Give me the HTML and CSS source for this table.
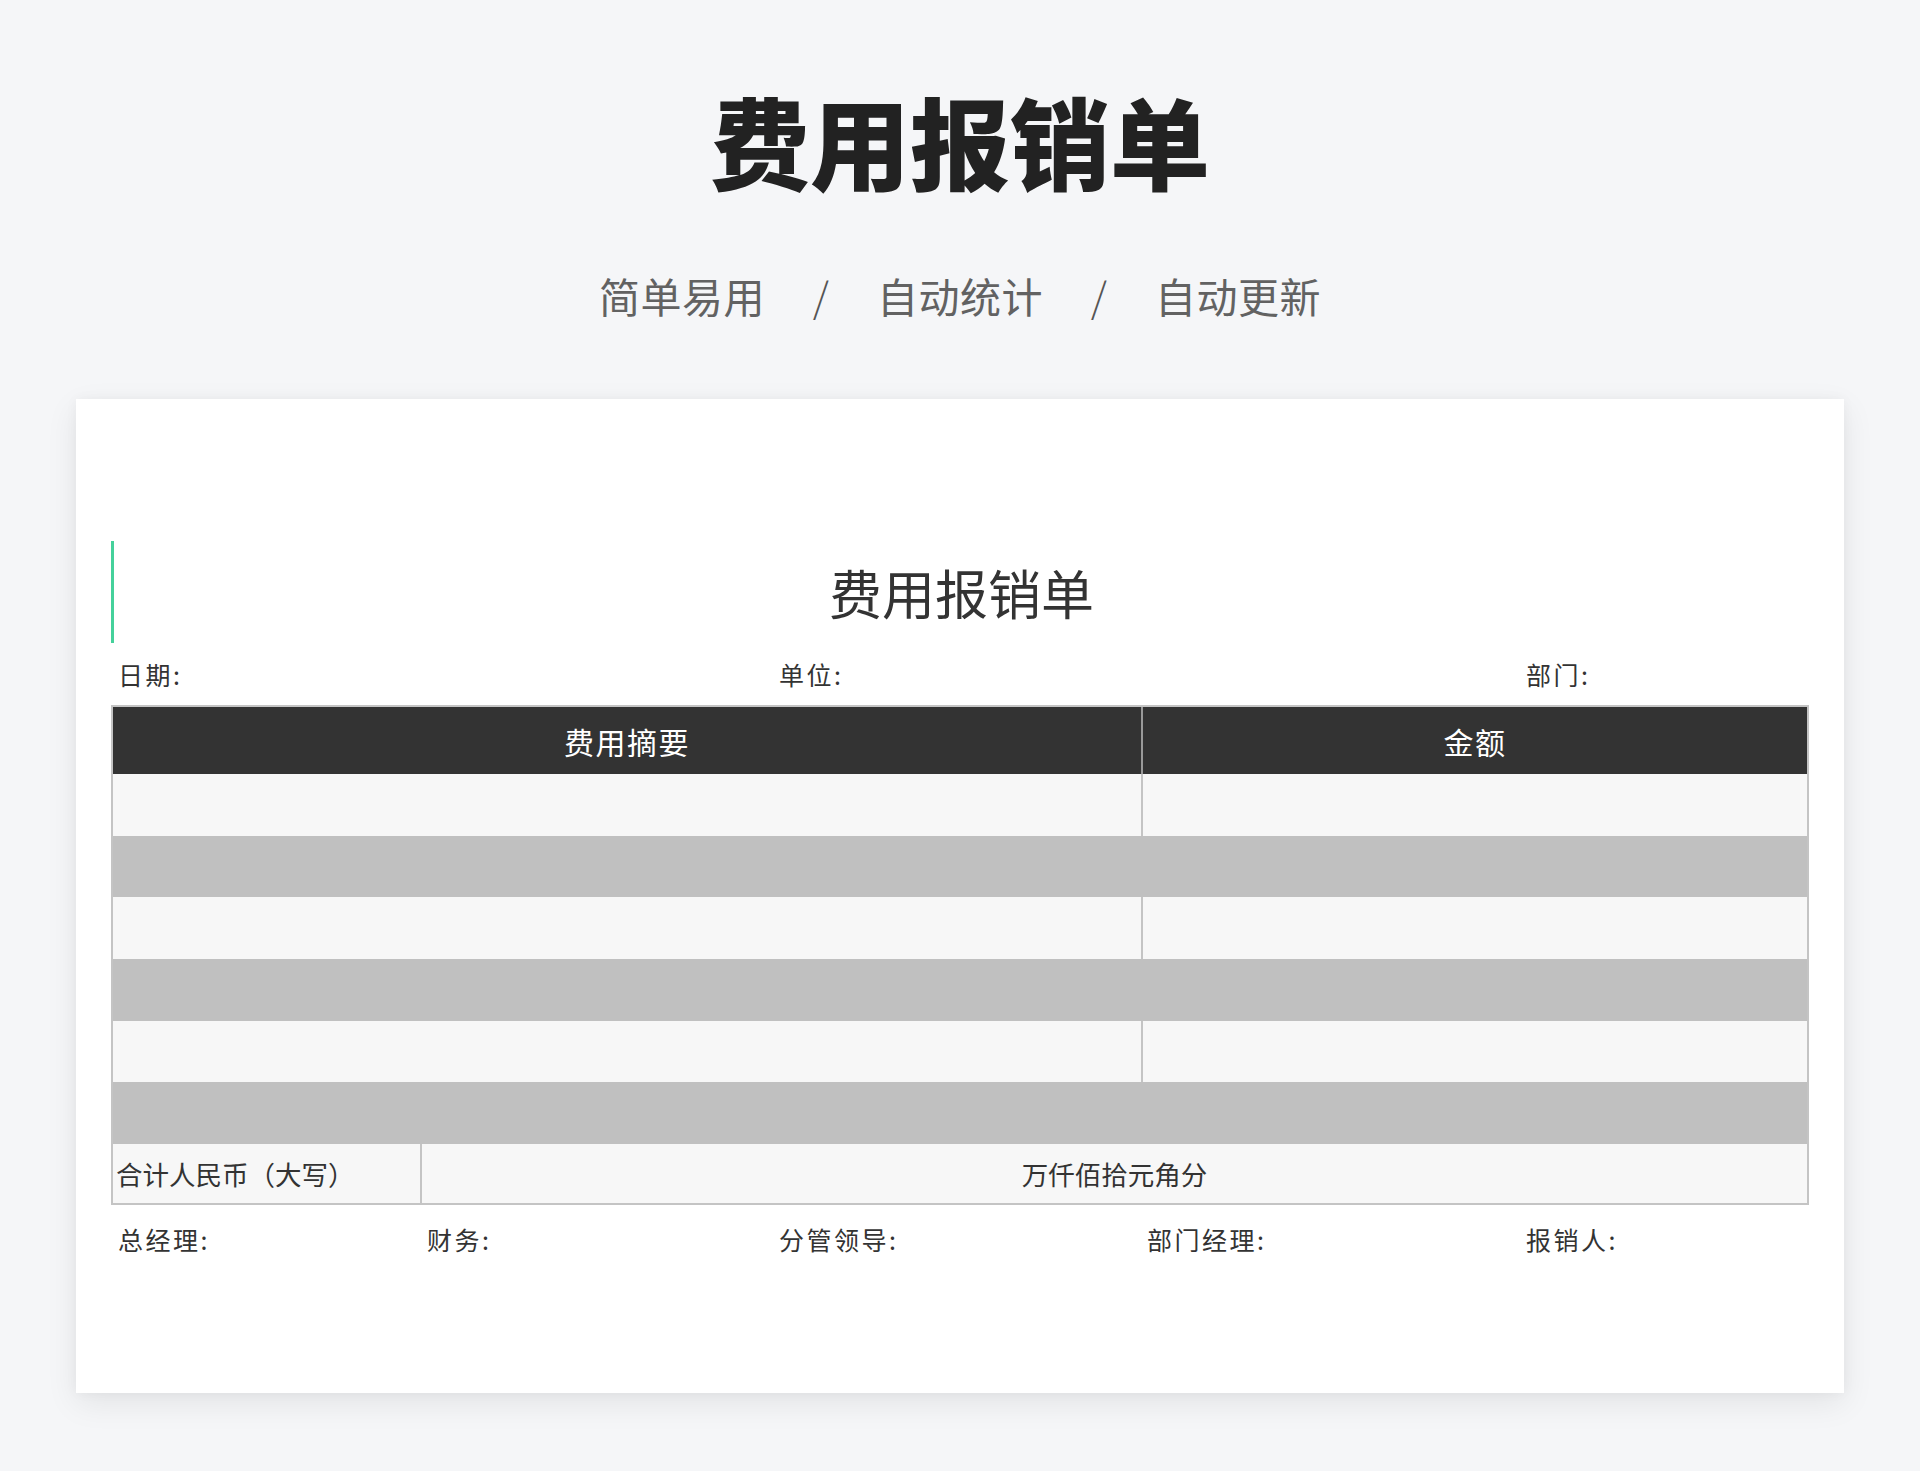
FILE: index.html
```html
<!DOCTYPE html>
<html lang="zh-CN">
<head>
<meta charset="utf-8">
<title>费用报销单</title>
<link rel="stylesheet" href="styles.css">
</head>
<body>
<header class="hero">
  <h1 class="hero-title">费用报销单</h1>
  <div class="hero-sub">
    <span>简单易用</span><span class="slash">/</span><span>自动统计</span><span class="slash">/</span><span>自动更新</span>
  </div>
</header>
<main class="card">
  <div class="sheet">
    <div class="sheet-title">费用报销单</div>
    <div class="info-row">
      <div class="c1">日期:</div>
      <div class="c2"></div>
      <div class="c3">单位:</div>
      <div class="c4"></div>
      <div class="c5">部门:</div>
    </div>
    <div class="tbl">
      <div class="row head"><div class="cell">费用摘要</div><div class="cell">金额</div></div>
      <div class="row light"><div class="cell"></div><div class="cell"></div></div>
      <div class="row gray"></div>
      <div class="row light"><div class="cell"></div><div class="cell"></div></div>
      <div class="row gray"></div>
      <div class="row light"><div class="cell"></div><div class="cell"></div></div>
      <div class="row gray"></div>
      <div class="row total"><div class="cell left">合计人民币（大写）</div><div class="cell">万仟佰拾元角分</div></div>
    </div>
    <div class="info-row foot">
      <div>总经理:</div>
      <div>财务:</div>
      <div>分管领导:</div>
      <div>部门经理:</div>
      <div>报销人:</div>
    </div>
  </div>
</main>
</body>
</html>
```
FILE: styles.css
```css
* { box-sizing: border-box; }
html, body { margin: 0; padding: 0; }
body {
  background: #f5f6f8;
  font-family: "Noto Sans CJK SC", "Noto Sans", sans-serif;
  color: #333;
  padding-bottom: 78px;
}
.hero { padding-top: 90px; text-align: center; }
.hero-title {
  margin: 0;
  font-size: 100px;
  line-height: 100px;
  font-weight: 900;
  color: #222;
}
.hero-sub {
  margin-top: 85px;
  display: flex;
  justify-content: center;
  gap: 46px;
  font-size: 41px;
  line-height: 40px;
  letter-spacing: 0.5px;
  color: #626262;
  font-weight: 400;
}
.hero-sub .slash {
  width: 20px;
  text-align: center;
  font-weight: 300;
  color: #555;
}
.card {
  margin: 84px 76px 0;
  height: 994px;
  background: #fff;
  box-shadow: 0 10px 30px rgba(0, 0, 0, 0.08), 0 0 12px rgba(0, 0, 0, 0.04);
  padding: 142px 35px 0;
}
.sheet-title {
  height: 102px;
  border-left: 3px solid #45d19b;
  display: flex;
  align-items: center;
  justify-content: center;
  font-size: 53px;
  color: #333;
}
.info-row {
  display: grid;
  grid-template-columns: 311px 350px 369px 378px 1fr;
  height: 62px;
  align-items: center;
  font-size: 25px;
  letter-spacing: 2.5px;
  color: #333;
}
.info-row > div { padding-left: 7px; }
.info-row.foot { height: 68px; }
.info-row.foot > div:nth-child(2) { padding-left: 5px; }
.info-row.foot > div:nth-child(4) { padding-left: 6px; }
.tbl {
  border: 2px solid #c4c4c4;
}
.row {
  display: grid;
  grid-template-columns: 1028px 1fr;
  height: 61.7px;
}
.row.head {
  height: 67px;
  background: #333;
  color: #fff;
  font-size: 30px;
  letter-spacing: 1.5px;
}
.row.head .cell + .cell { border-left: 2px solid #9a9a9a; }
.row .cell {
  display: flex;
  align-items: center;
  justify-content: center;
}
.row.light { background: #f7f7f7; }
.row.light .cell + .cell { border-left: 2px solid #c4c4c4; }
.row.gray { background: #c0c0c0; }
.row.total {
  background: #f7f7f7;
  grid-template-columns: 307px 1fr;
  font-size: 26.5px;
  color: #333;
  height: 59px;
}
.row.total .cell + .cell { border-left: 2px solid #c4c4c4; }
.row.total .cell.left { justify-content: flex-start; padding-left: 3px; }
```
